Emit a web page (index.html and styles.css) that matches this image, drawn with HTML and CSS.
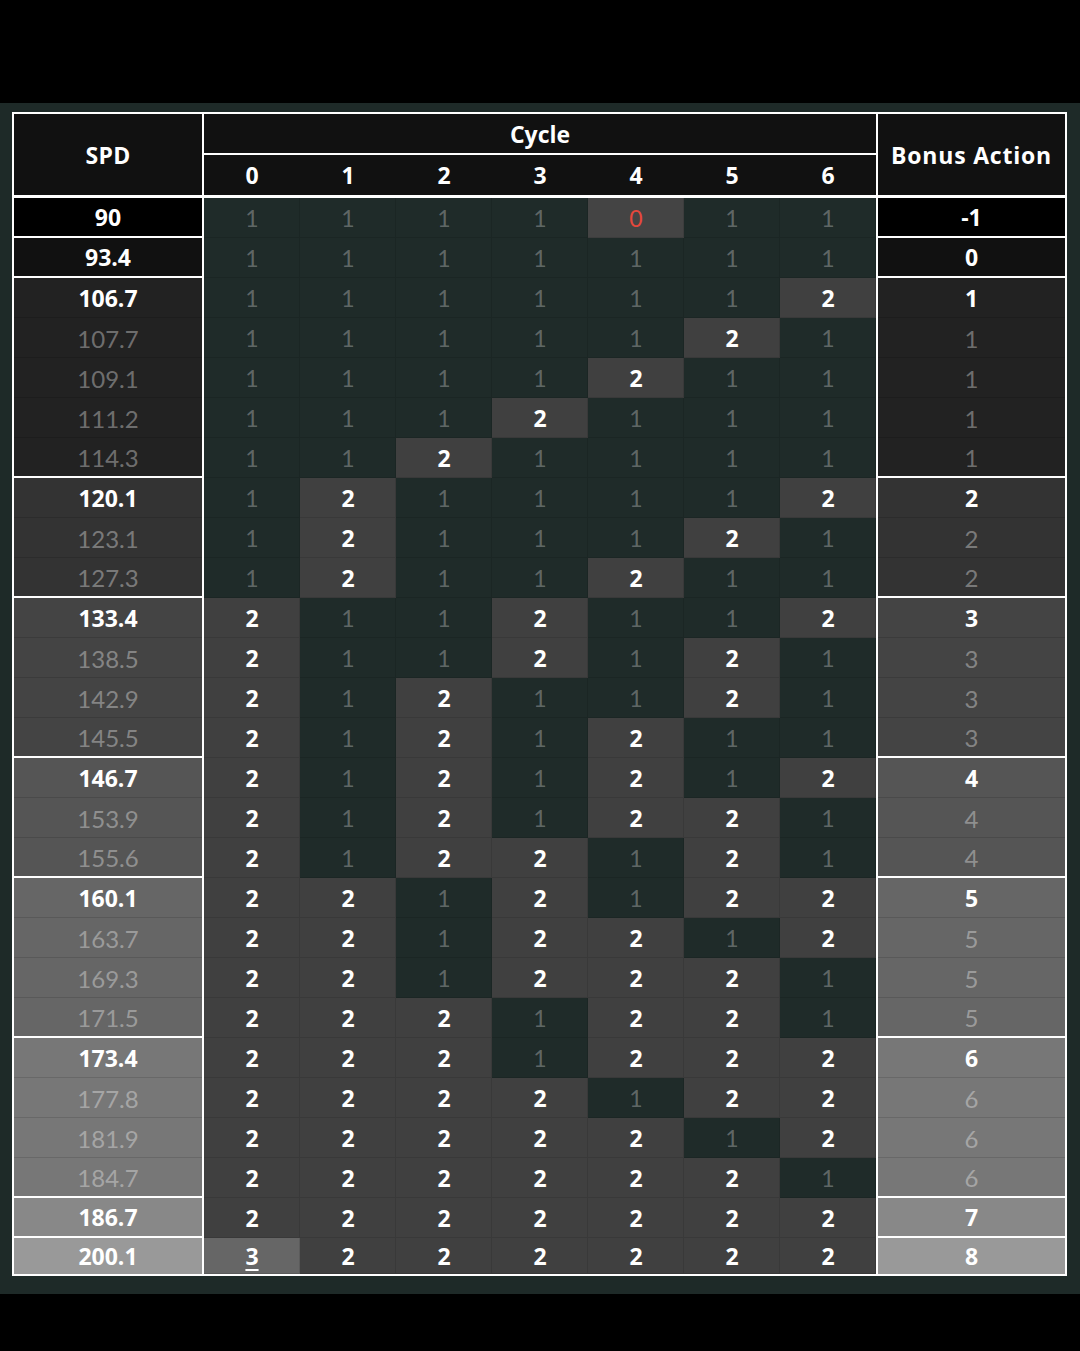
FILE: index.html
```html
<!DOCTYPE html>
<html>
<head>
<meta charset="utf-8">
<link rel="stylesheet" href="styles.css">
</head>
<body>
<div class="panel">
  <div class="table">
    <div class="head">
      <div class="hcell side-head">SPD</div>
      <div class="cycle-head">
        <div class="cycle-title">Cycle</div>
        <div class="cycle-nums">
          <span>0</span><span>1</span><span>2</span><span>3</span><span>4</span><span>5</span><span>6</span>
        </div>
      </div>
      <div class="hcell side-head bonus-head">Bonus Action</div>
    </div>
    <div class="body">
      <div class="side">
        <div class="cell g0 lead end">90</div>
        <div class="cell g1 lead end">93.4</div>
        <div class="cell g2 lead">106.7</div>
        <div class="cell g2">107.7</div>
        <div class="cell g2">109.1</div>
        <div class="cell g2">111.2</div>
        <div class="cell g2 end">114.3</div>
        <div class="cell g3 lead">120.1</div>
        <div class="cell g3">123.1</div>
        <div class="cell g3 end">127.3</div>
        <div class="cell g4 lead">133.4</div>
        <div class="cell g4">138.5</div>
        <div class="cell g4">142.9</div>
        <div class="cell g4 end">145.5</div>
        <div class="cell g5 lead">146.7</div>
        <div class="cell g5">153.9</div>
        <div class="cell g5 end">155.6</div>
        <div class="cell g6 lead">160.1</div>
        <div class="cell g6">163.7</div>
        <div class="cell g6">169.3</div>
        <div class="cell g6 end">171.5</div>
        <div class="cell g7 lead">173.4</div>
        <div class="cell g7">177.8</div>
        <div class="cell g7">181.9</div>
        <div class="cell g7 end">184.7</div>
        <div class="cell g8 lead end">186.7</div>
        <div class="cell g9 lead last">200.1</div>
      </div>
      <div class="grid">
        <span class="o">1</span><span class="o">1</span><span class="o">1</span><span class="o">1</span><span class="z">0</span><span class="o">1</span><span class="o">1</span>
        <span class="o">1</span><span class="o">1</span><span class="o">1</span><span class="o">1</span><span class="o">1</span><span class="o">1</span><span class="o">1</span>
        <span class="o">1</span><span class="o">1</span><span class="o">1</span><span class="o">1</span><span class="o">1</span><span class="o">1</span><span class="t">2</span>
        <span class="o">1</span><span class="o">1</span><span class="o">1</span><span class="o">1</span><span class="o">1</span><span class="t">2</span><span class="o">1</span>
        <span class="o">1</span><span class="o">1</span><span class="o">1</span><span class="o">1</span><span class="t">2</span><span class="o">1</span><span class="o">1</span>
        <span class="o">1</span><span class="o">1</span><span class="o">1</span><span class="t">2</span><span class="o">1</span><span class="o">1</span><span class="o">1</span>
        <span class="o">1</span><span class="o">1</span><span class="t">2</span><span class="o">1</span><span class="o">1</span><span class="o">1</span><span class="o">1</span>
        <span class="o">1</span><span class="t">2</span><span class="o">1</span><span class="o">1</span><span class="o">1</span><span class="o">1</span><span class="t">2</span>
        <span class="o">1</span><span class="t">2</span><span class="o">1</span><span class="o">1</span><span class="o">1</span><span class="t">2</span><span class="o">1</span>
        <span class="o">1</span><span class="t">2</span><span class="o">1</span><span class="o">1</span><span class="t">2</span><span class="o">1</span><span class="o">1</span>
        <span class="t">2</span><span class="o">1</span><span class="o">1</span><span class="t">2</span><span class="o">1</span><span class="o">1</span><span class="t">2</span>
        <span class="t">2</span><span class="o">1</span><span class="o">1</span><span class="t">2</span><span class="o">1</span><span class="t">2</span><span class="o">1</span>
        <span class="t">2</span><span class="o">1</span><span class="t">2</span><span class="o">1</span><span class="o">1</span><span class="t">2</span><span class="o">1</span>
        <span class="t">2</span><span class="o">1</span><span class="t">2</span><span class="o">1</span><span class="t">2</span><span class="o">1</span><span class="o">1</span>
        <span class="t">2</span><span class="o">1</span><span class="t">2</span><span class="o">1</span><span class="t">2</span><span class="o">1</span><span class="t">2</span>
        <span class="t">2</span><span class="o">1</span><span class="t">2</span><span class="o">1</span><span class="t">2</span><span class="t">2</span><span class="o">1</span>
        <span class="t">2</span><span class="o">1</span><span class="t">2</span><span class="t">2</span><span class="o">1</span><span class="t">2</span><span class="o">1</span>
        <span class="t">2</span><span class="t">2</span><span class="o">1</span><span class="t">2</span><span class="o">1</span><span class="t">2</span><span class="t">2</span>
        <span class="t">2</span><span class="t">2</span><span class="o">1</span><span class="t">2</span><span class="t">2</span><span class="o">1</span><span class="t">2</span>
        <span class="t">2</span><span class="t">2</span><span class="o">1</span><span class="t">2</span><span class="t">2</span><span class="t">2</span><span class="o">1</span>
        <span class="t">2</span><span class="t">2</span><span class="t">2</span><span class="o">1</span><span class="t">2</span><span class="t">2</span><span class="o">1</span>
        <span class="t">2</span><span class="t">2</span><span class="t">2</span><span class="o">1</span><span class="t">2</span><span class="t">2</span><span class="t">2</span>
        <span class="t">2</span><span class="t">2</span><span class="t">2</span><span class="t">2</span><span class="o">1</span><span class="t">2</span><span class="t">2</span>
        <span class="t">2</span><span class="t">2</span><span class="t">2</span><span class="t">2</span><span class="t">2</span><span class="o">1</span><span class="t">2</span>
        <span class="t">2</span><span class="t">2</span><span class="t">2</span><span class="t">2</span><span class="t">2</span><span class="t">2</span><span class="o">1</span>
        <span class="t">2</span><span class="t">2</span><span class="t">2</span><span class="t">2</span><span class="t">2</span><span class="t">2</span><span class="t">2</span>
        <span class="h">3</span><span class="t">2</span><span class="t">2</span><span class="t">2</span><span class="t">2</span><span class="t">2</span><span class="t">2</span>
      </div>
      <div class="side bonus">
        <div class="cell g0 lead end">-1</div>
        <div class="cell g1 lead end">0</div>
        <div class="cell g2 lead">1</div>
        <div class="cell g2">1</div>
        <div class="cell g2">1</div>
        <div class="cell g2">1</div>
        <div class="cell g2 end">1</div>
        <div class="cell g3 lead">2</div>
        <div class="cell g3">2</div>
        <div class="cell g3 end">2</div>
        <div class="cell g4 lead">3</div>
        <div class="cell g4">3</div>
        <div class="cell g4">3</div>
        <div class="cell g4 end">3</div>
        <div class="cell g5 lead">4</div>
        <div class="cell g5">4</div>
        <div class="cell g5 end">4</div>
        <div class="cell g6 lead">5</div>
        <div class="cell g6">5</div>
        <div class="cell g6">5</div>
        <div class="cell g6 end">5</div>
        <div class="cell g7 lead">6</div>
        <div class="cell g7">6</div>
        <div class="cell g7">6</div>
        <div class="cell g7 end">6</div>
        <div class="cell g8 lead end">7</div>
        <div class="cell g9 lead last">8</div>
      </div>
    </div>
  </div>
</div>
</body>
</html>
```
FILE: styles.css
```css
html, body {
  margin: 0;
  padding: 0;
  background: #000;
}
body {
  font-family: "Lato", "DejaVu Sans", sans-serif;
  color: #fff;
}
.panel {
  margin-top: 103px;
  height: 1191px;
  box-sizing: border-box;
  padding: 9px 0 0 12px;
  background: #1e2a28;
}
.table {
  width: 1055px;
  box-sizing: border-box;
  border: 2px solid #fff;
  background: #fff;
}
.head {
  display: flex;
  gap: 2px;
  padding-bottom: 3px;
  background: #fff;
}
.hcell {
  width: 188px;
  height: 81px;
  background: #111;
  display: flex;
  align-items: center;
  justify-content: center;
  font-family: "Open Sans", "Lato", sans-serif;
  font-weight: 700;
  font-size: 23px;
  letter-spacing: 0.3px;
}
.bonus-head {
  width: 187px;
  letter-spacing: 0.8px;
}
.cycle-head {
  width: 672px;
  display: flex;
  flex-direction: column;
  gap: 2px;
}
.cycle-title {
  height: 39px;
  background: #111;
  display: flex;
  align-items: center;
  justify-content: center;
  font-family: "Open Sans", "Lato", sans-serif;
  font-weight: 700;
  font-size: 23px;
}
.cycle-nums {
  height: 40px;
  background: #111;
  display: grid;
  grid-template-columns: repeat(7, 96px);
  font-family: "Open Sans", "Lato", sans-serif;
  font-weight: 700;
  font-size: 23px;
}
.cycle-nums span {
  display: flex;
  align-items: center;
  justify-content: center;
}
.body {
  display: flex;
  gap: 2px;
  background: #fff;
}
.side {
  width: 188px;
  display: flex;
  flex-direction: column;
}
.side.bonus {
  width: 187px;
}
.cell {
  height: 40px;
  box-sizing: border-box;
  display: flex;
  align-items: center;
  justify-content: center;
  font-size: 24px;
  color: rgba(255, 255, 255, 0.36);
  box-shadow: inset 0 -1px 0 rgba(0, 0, 0, 0.12);
}
.cell.lead {
  color: #fff;
  font-family: "Open Sans", "Lato", sans-serif;
  font-weight: 700;
  font-size: 23px;
}
.cell.end {
  border-bottom: 2px solid #fff;
  box-shadow: none;
}
.cell.last {
  height: 36px;
  box-shadow: none;
}
.g0 { background: #000; }
.g1 { background: #111; }
.g2 { background: #222; }
.g3 { background: #333; }
.g4 { background: #444; }
.g5 { background: #555; }
.g6 { background: #666; }
.g7 { background: #777; }
.g8 { background: #888; }
.g9 { background: #999; }
.grid {
  width: 672px;
  display: grid;
  grid-template-columns: repeat(7, 96px);
  grid-template-rows: repeat(26, 40px) 36px;
  background: #1e2a28;
}
.grid span {
  display: flex;
  align-items: center;
  justify-content: center;
  font-size: 23px;
  box-shadow: inset -1px -1px 0 rgba(0, 0, 0, 0.1);
}
.grid .o {
  background: #1f2b29;
  color: rgba(255, 255, 255, 0.3);
}
.grid .t {
  background: #404040;
  color: #fff;
  font-family: "Open Sans", "Lato", sans-serif;
  font-weight: 700;
}
.grid .z {
  background: #444;
  color: #e5483c;
}
.grid .h {
  background: #666;
  color: #fff;
  font-family: "Open Sans", "Lato", sans-serif;
  font-weight: 700;
  text-decoration: underline;
  text-underline-offset: 4px;
}
```
